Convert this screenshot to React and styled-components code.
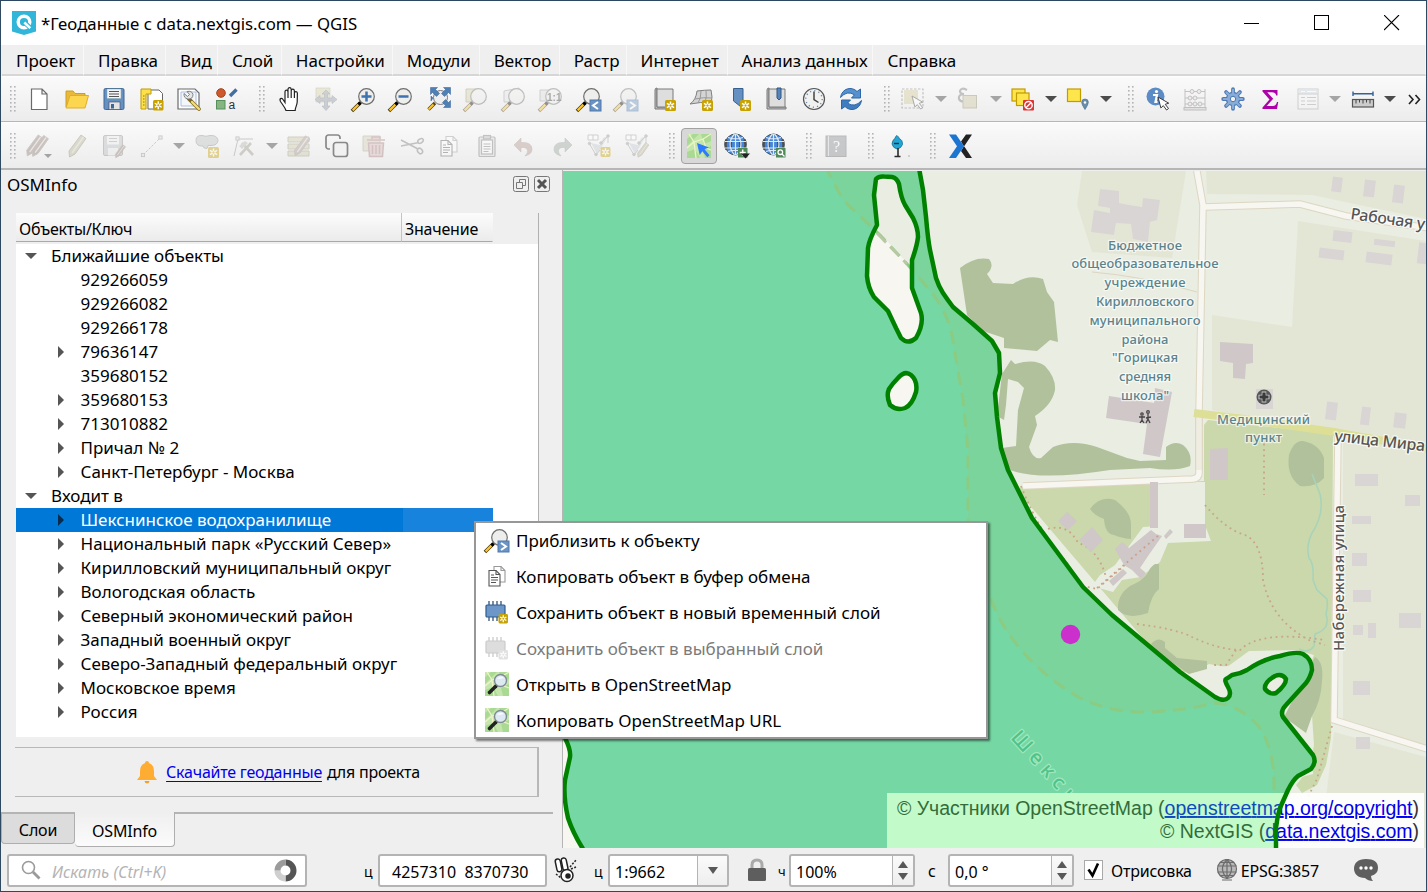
import React from "react";
import styled, { createGlobalStyle, css } from "styled-components";

const GlobalStyle = createGlobalStyle`
  * { box-sizing: border-box; }
  body {
    margin: 0;
    background: #efefef;
    color: #000;
    font-family: "Noto Sans", "Open Sans", sans-serif;
    font-size: 17px;
    overflow: hidden;
  }
  svg { display: block; }
`;

/* ---------- window frame ---------- */

const Window = styled.div`
  display: flex;
  flex-direction: column;
  width: 1427px;
  height: 892px;
  position: relative;
  background: #efefef;
  border: 1px solid #2f4a60;
  border-top-color: #2b4763;
  overflow: hidden;
  white-space: nowrap;
`;

const TitleBar = styled.header`
  display: flex;
  align-items: center;
  flex: 0 0 44px;
  padding: 0 25px 0 11px;
  background: #fff;
`;

const Title = styled.h1`
  flex: 1;
  margin: 0 0 0 5px;
  font-size: 16.8px;
  font-weight: 400;
`;

const WindowButtons = styled.div`
  display: flex;
  gap: 53px;
  svg { margin-right: 1px; }
`;

const MenuBar = styled.nav`
  display: flex;
  flex: 0 0 31px;
  padding-left: 1px;
`;

const MenuEntry = styled.div`
  width: ${(p) => p.$w}px;
  padding: 0 0 0 14px;
  line-height: 31px;
  border-bottom: 2px solid #d6d6d6;
  border-right: 1px solid #f8f8f8;
  height: 31px;
`;

/* ---------- toolbars ---------- */

const Toolbar = styled.div`
  display: flex;
  align-items: center;
  flex: 0 0 ${(p) => p.$h}px;
  background: linear-gradient(#fafafa, #ececec);
  border-bottom: ${(p) => p.$line}px solid #b6b6b6;
  border-top: 1px solid #fdfdfd;
`;

const GripSlot = styled.div`
  display: flex;
  justify-content: flex-end;
  width: ${(p) => p.$w || 24}px;
  padding-right: 4px;
`;

const Tool = styled.div`
  display: flex;
  align-items: center;
  justify-content: center;
  width: 37.5px;
  height: 36px;
  > svg { opacity: ${(p) => (p.$off ? 0.4 : 1)}; }
  ${(p) =>
    p.$active &&
    css`
      > svg {
        box-sizing: content-box;
        padding: 5px;
        background: #d8d8d8;
        border: 1px solid #a2a2a2;
        border-radius: 4px;
      }
    `}
`;

const DropSlot = styled.div`
  width: 17.5px;
  display: flex;
  justify-content: center;
`;

const Triangle = styled.i`
  border: 6px solid transparent;
  border-top-color: ${(p) => (p.$off ? "#a5a5a5" : "#4c4c4c")};
  border-bottom: 0;
`;

function Grip({ w }) {
  return (
    <GripSlot $w={w}>
      <svg width="8" height="26" viewBox="0 0 8 26">
        {[0, 4, 8, 12, 16, 20, 24].map((y) => (
          <g key={y}>
            <rect x="1" y={y} width="1.6" height="1.6" fill="#b4b4b4" />
            <rect x="5" y={y} width="1.6" height="1.6" fill="#b4b4b4" />
          </g>
        ))}
      </svg>
    </GripSlot>
  );
}

/* ---------- icons, all on a 24 × 24 grid ---------- */

const Star = ({ x = 13, y = 13, s = 11 }) => (
  <g transform={`translate(${x} ${y}) scale(${s / 11})`}>
    <rect width="11" height="11" rx="1.6" fill="#c8a200" />
    <path d="M5.5 1.4v8.2M1.9 3.4l7.2 4.2M9.1 3.4L1.9 7.6" stroke="#fff" strokeWidth="1.5" />
    <circle cx="5.5" cy="5.5" r="1.5" fill="#c8a200" stroke="#fff" strokeWidth=".8" />
  </g>
);

const Lens = ({ cx = 14.5, cy = 9.5, r = 7.8 }) => (
  <g>
    <path d="M1.2 22.8L7 17" stroke="#4a3a10" strokeWidth="3.6" strokeLinecap="square" />
    <path d="M1.4 22.6L6.2 17.8" stroke="#fbc52f" strokeWidth="2.2" strokeLinecap="square" />
    <path d="M6.4 17.6L8.8 15.2" stroke="#000" strokeWidth="3" />
    <circle cx={cx} cy={cy} r={r} fill="#eeeeec" stroke="#6e6e6e" strokeWidth="1.2" />
  </g>
);

const Sheet = () => <path d="M1 2h17l4 4v16H1z" fill="#fff" stroke="#6b6b6b" strokeWidth="1.2" />;

const Cursor = ({ x = 11, y = 10, fill = "#fff", stroke = "#333", s = 1 }) => (
  <path
    transform={`translate(${x} ${y}) scale(${s})`}
    d="M0 0l3 11.5 2.6-2.4 3.4 4.6 2.1-1.6-3.5-4.4 3.7-1.2z"
    fill={fill}
    stroke={stroke}
    strokeWidth="1"
  />
);

const Globe = () => (
  <g>
    <circle cx="11.5" cy="10.5" r="10.5" fill="#4587d6" stroke="#4a535e" strokeWidth="1" />
    <path d="M2.5 5.500q-2 5 0 10M20.500 5.500q2 5 0 10M7 7.500q-1 3 0 6M16 7.500q1 3 0 6" stroke="#4a4d52" strokeWidth="2.400" fill="none" />
    <path d="M1 7.500h21M1 14h21M4 3.5q7.5 2.500 15 0M4 17.5q7.5-2.500 15 0M11.5 0v21M10.5 0q-9 10 0 21M12.500 0q9 10 0 21" fill="none" stroke="#dfeaf6" strokeWidth="1.2" />
  </g>
);

const OsmTile = () => (
  <g>
    <rect x="0" y="0" width="24" height="24" fill="#c4e6ac" />
    <path d="M0 5l6-5h6L0 12zM14 0h10v7l-7 3zM0 18l8-3 5 9H0zM16 16l8-4v12h-6z" fill="#aad994" />
    <path d="M2 0l5 8-7 6M7 8l9-3 8-5M16 5l3 9 5 2M7 8l2 16" stroke="#eef3c8" strokeWidth="1.3" fill="none" />
  </g>
);

const Node = ({ x, y }) => <rect x={x - 1.6} y={y - 1.6} width="3.2" height="3.2" fill="#ddd" stroke="#888" strokeWidth=".9" />;

const Chip = () => (
  <g>
    <path d="M4 1v20M8 1v20M12 1v20M16 1v20" stroke="#26456b" strokeWidth="1.2" />
    <rect x="1" y="5" width="19" height="12" rx="1" fill="#6d97c9" stroke="#2f5a8e" strokeWidth="1.2" />
  </g>
);

const Copy = () => (
  <g fill="#fff" stroke="#555" strokeWidth="1.1">
    <path d="M9 2.5h7l4 4V18H9z" stroke="#999" />
    <path d="M16 2.5v4h4" fill="none" stroke="#999" />
    <path d="M4 6.500h7l4 4V22H4z" />
    <path d="M11 6.500v4h4M6 11h3M6 13.500h7M6 16h7M6 18.500h5" fill="none" />
  </g>
);

const Scroll = () => (
  <g>
    <path d="M3 3q0-2 2-2v19h17v2H3z" fill="#bcbcbc" stroke="#7a7a7a" />
    <path d="M5 2h16v18H5z" fill="#dedede" stroke="#7a7a7a" />
  </g>
);

const Poly = () => (
  <g stroke="#999">
    <path d="M4 9l6 11 4-6 7-12-5 2-3 7-9-2z" fill="#c5cbd1" stroke="none" />
    <path d="M1 1h10v5H1zM6 1v5" fill="#fff" />
    <path d="M2 9l7 12 4-5M14 9l7-7v7" fill="none" />
    <g fill="#9a8a96"><circle cx="2.500" cy="9.500" r="1.300" /><circle cx="9" cy="20.500" r="1.300" /><circle cx="21" cy="2" r="1.300" /><circle cx="14" cy="9" r="1.300" /></g>
  </g>
);

const Pencil = ({ t = "", c = "#b7b28e" }) => (
  <g transform={t}>
    <path d="M16 1l5 3.500L10 20l-5.500 3L4 17z" fill={c} stroke="#8b887c" strokeWidth="1" />
    <path d="M18.500 3L7 19" stroke="#dad7c6" strokeWidth="1.400" />
  </g>
);

const ICONS = {
  logo: (
    <>
      <path d="M0 0h24v20.500L12 24 0 20.500z" fill="#31b6da" />
      <circle cx="12" cy="11" r="5.800" fill="none" stroke="#fff" strokeWidth="3.400" />
      <path d="M11.500 10.500l7.500 7" stroke="#31b6da" strokeWidth="4.500" />
      <path d="M12.300 11.500l6 5.700" stroke="#fff" strokeWidth="2.500" />
    </>
  ),
  newFile: <path d="M4.500 2h10.500l5 5v15.500h-15.500zM15 2v5h5" fill="#fff" stroke="#6a6a6a" strokeWidth="1.200" />,
  open: (
    <>
      <path d="M1 20V4h7l2 2.500h10V9" fill="#e9b93a" stroke="#cf9e22" />
      <path d="M1 21L5 8.500h18.500L20 21z" fill="#fcd64f" stroke="#dcae2e" />
    </>
  ),
  save: (
    <>
      <rect x="2" y="1.500" width="20" height="21" rx="1.500" fill="#6590c2" stroke="#3f6796" />
      <rect x="5" y="2" width="14" height="9.500" fill="#f4f4f4" stroke="#8aa" strokeWidth=".5" />
      <path d="M7 4.500h10M7 7h10M7 9.500h10" stroke="#555" />
      <rect x="7" y="15" width="11" height="7.500" fill="#e4e4e4" stroke="#446" strokeWidth=".6" />
      <rect x="9" y="17" width="3" height="4.500" fill="#3f6796" />
    </>
  ),
  layout: (
    <>
      <path d="M8 3h11l3.500 3.500V22H8z" fill="#fff" stroke="#666" />
      <path d="M1 2h10v5H6v15H1z" fill="#fde14a" stroke="#c29b00" />
      <path d="M3 9h1.500M3 12h1.500M3 15h1.500M3 18h1.500" stroke="#9a7b00" />
      <Star x={13} y={13} s={10.5} />
    </>
  ),
  manage: (
    <>
      <Sheet />
      <path d="M4 5h15v14H4z" fill="#f4f6fa" stroke="#a7bfe4" />
      <path d="M11.500 11.500L22 22" stroke="#7d6a24" strokeWidth="3.800" strokeLinecap="round" />
      <path d="M15 15l7 7" stroke="#f3dc73" strokeWidth="2.400" strokeLinecap="round" />
      <path d="M7 6.500l3.500 3 2-2L10 4.500q5-1 6 3-.2 5-5.200 4.500Q6.500 11 7 6.500z" fill="#e5e5e5" stroke="#777" strokeWidth=".9" />
    </>
  ),
  style: (
    <>
      <circle cx="6" cy="6" r="4.300" fill="#cc5a2c" stroke="#a5431b" />
      <path d="M21.500 2.500L15 9" stroke="#426f9f" strokeWidth="3.400" />
      <rect x="1.500" y="13.500" width="8.500" height="8.500" fill="#86b582" stroke="#55905a" />
      <text x="13.500" y="22" fontSize="12" fontFamily="Liberation Sans, sans-serif" fill="#333">a</text>
    </>
  ),
  hand: <path d="M9 23.500c-1-3-3.500-6-5.500-9-1.500-3 1-4 2.500-2l2 3V5c0-2.500 2.700-2.500 3 0V2.500c0-2.500 3-2.500 3.200 0V4c.2-2.500 3-2.300 3.200 0v2c.4-2 2.900-1.800 3 .3L20.200 15c-.3 4-2 5-2 8.500zM11 5v6M14.200 4v7M17.400 6v5" fill="#fff" stroke="#222" strokeWidth="1.200" />,
  panSel: (
    <>
      <rect x="2" y="1" width="14" height="14" fill="#d6d0a4" stroke="#a19a70" strokeWidth=".6" />
      <path d="M12 3l4 4h-2.500v4H18V8.500l5 4-5 4V14h-4.500v5H16l-4 4.500L8 19h2.500v-5H6v2.500l-5-4 5-4V11h4.500V7H8z" fill="#9299a3" stroke="#6f7680" strokeWidth=".7" />
    </>
  ),
  zoomIn: (<><Lens /><path d="M14.500 4.500v10M9.500 9.500h10" stroke="#3d73b0" strokeWidth="2.500" /></>),
  zoomOut: (<><Lens /><path d="M9.500 9.500h10" stroke="#3d73b0" strokeWidth="2.500" /></>),
  zoomFull: (
    <>
      <path d="M1.500 22.500L8 16" stroke="#5b4712" strokeWidth="3.400" />
      <path d="M1.700 22.300L6.500 17.500" stroke="#fbc52f" strokeWidth="2" />
      <circle cx="13.500" cy="10.500" r="7" fill="#eee" stroke="#777" />
      <path d="M3.500.5h7L8.500 2.500l4 4-3 3-4-4-2 2zM23.500.5v7l-2-2-4 4-3-3 4-4-2-2zM23.500 20.500h-7l2-2-3-3 3-3 3 3 2-2zM4 9l2 2-2 3z" fill="#4e80b8" stroke="#345f90" strokeWidth=".5" />
    </>
  ),
  zoomSel: (<><path d="M2 2h13v13H2z" fill="#d6d0a4" stroke="#9d9774" /><Lens /></>),
  zoomLayer: (<><path d="M2 4l15-3v14H2z" fill="#e5e5e5" stroke="#999" /><Lens /></>),
  zoomNative: (
    <>
      <path d="M1 3h11v11H1z" fill="#ddd" stroke="#999" /><Lens />
      <text x="8" y="13.500" fontSize="10" fontWeight="700" fontFamily="Liberation Sans, sans-serif" fill="#333">1:1</text>
    </>
  ),
  zoomLast: (<><Lens /><rect x="13" y="13" width="11" height="11" fill="#6a94c4" stroke="#4e79ac" /><path d="M21 15l-5 3.500 5 3.500" stroke="#fff" strokeWidth="2" fill="none" /></>),
  zoomNext: (<><Lens /><rect x="13" y="13" width="11" height="11" fill="#6a94c4" stroke="#4e79ac" /><path d="M16 15l5 3.500-5 3.500" stroke="#fff" strokeWidth="2" fill="none" /></>),
  newMap: (<><Scroll /><Star /></>),
  new3d: (
    <>
      <path d="M1 17Q7 13 8 4q8-1 14-1 2 7 0 14-10-3-21 0z" fill="#d4d4d4" stroke="#808080" />
      <path d="M6 12q8-2 17-1M12 4q0 8-3 12M17 3q1 7-1 13" fill="none" stroke="#999" />
      <Star />
    </>
  ),
  newBookmark: (<><path d="M6.500 1.500H16v20l-5-4-4.500-3.500z" fill="#6590c2" stroke="#35608f" /><Star /></>),
  bookmarks: (<><Scroll /><path d="M13 1h4v10l-2 2-2-2z" fill="#5684b9" stroke="#2f5684" /></>),
  clock: (
    <>
      <circle cx="12" cy="12" r="10.500" fill="#f1f1ef" stroke="#555" strokeWidth="1.200" />
      <circle cx="12" cy="12" r="8.200" fill="none" stroke="#6b8fb8" strokeWidth="1.400" strokeDasharray="1.200 3.090" />
      <path d="M12 4.500V12.500l4.500 3" fill="none" stroke="#444" strokeWidth="1.500" />
    </>
  ),
  refresh: (
    <>
      <path d="M1.500 10.500C3 1 13-1 18 4.500L21.500 2v9h-9l3-3.200Q8 3 1.500 10.500z" fill="#5590cf" stroke="#2d67a8" />
      <path d="M22.500 13.500C21 23 11 25 6 19.500L2.500 22v-9h9l-3 3.200Q16 21 22.500 13.500z" fill="#3f7cc0" stroke="#2d67a8" />
    </>
  ),
  select: (
    <>
      <rect x="3" y="3" width="14" height="14" fill="#d0c896" stroke="none" />
      <rect x="1" y="2" width="21" height="19" fill="none" stroke="#777" strokeWidth="1.200" strokeDasharray="2.500 1.500" />
      <Cursor x={11} y={9} s={0.95} />
    </>
  ),
  expr: (
    <>
      <path d="M11 3Q5 0 4 4q0 3 4 3-6 .5-5 5 2 4 8 2" stroke="#777" strokeWidth="2.200" fill="none" />
      <rect x="7" y="8.500" width="13.500" height="12.500" fill="#ccc6a2" stroke="#8f8b6c" />
    </>
  ),
  deselect: (
    <>
      <rect x="1" y="2" width="13" height="12" fill="#fde64b" stroke="#c29b00" strokeWidth="1.200" />
      <rect x="5.500" y="6" width="12.500" height="12.500" fill="#fde64b" stroke="#c29b00" strokeWidth="1.200" />
      <rect x="12" y="13" width="11" height="10.500" rx="1" fill="#dd3535" />
      <circle cx="17.500" cy="18.200" r="3.700" fill="none" stroke="#fff" strokeWidth="1.400" />
      <path d="M15 20.700l5-5" stroke="#fff" strokeWidth="1.400" />
    </>
  ),
  selectPlace: (
    <>
      <rect x="1.500" y="2" width="13" height="12.500" fill="#fde64b" stroke="#c29b00" strokeWidth="1.200" />
      <path d="M19 22.500q-3.300-5-3.300-7.200a3.300 3.300 0 0 1 6.600 0Q22.300 17.500 19 22.500z" fill="#6a8fab" stroke="#4b7390" strokeWidth=".7" />
      <circle cx="19" cy="15.500" r="1.200" fill="#fff" />
    </>
  ),
  identify: (
    <>
      <circle cx="9.500" cy="9.500" r="9" fill="#5c8cc6" />
      <circle cx="10.500" cy="4.500" r="1.600" fill="#fff" />
      <path d="M7 8h4l-1.500 7h2" fill="none" stroke="#fff" strokeWidth="2.200" />
      <Cursor x={12} y={10} s={0.95} />
    </>
  ),
  abacus: (
    <g fill="none" stroke="#777">
      <path d="M2 2v19M22 2v19M2 4.500h20M2 11h20M2 17h20" /><rect x="1" y="20.500" width="22" height="2.500" fill="#ccc" />
      <g fill="#eadfe0"><circle cx="9" cy="4.500" r="2" /><circle cx="16" cy="4.500" r="2" /><circle cx="7" cy="11" r="2" /><circle cx="12" cy="11" r="2" /><circle cx="7" cy="17" r="2" /><circle cx="12" cy="17" r="2" /><circle cx="17" cy="17" r="2" /></g>
    </g>
  ),
  gear: (
    <>
      {[0, 45, 90, 135].map((a) => (
        <path key={a} d="M12 2.200v19.600" stroke="#4d7ab3" strokeWidth="3.800" strokeLinecap="round" transform={`rotate(${a} 12 12)`} />
      ))}
      <circle cx="12" cy="12" r="6.600" fill="#88abd8" stroke="#4d7ab3" strokeWidth="1.200" />
      {[0, 45, 90, 135].map((a) => (
        <path key={a} d="M12 2.800v4.600M12 16.600v4.600" stroke="#88abd8" strokeWidth="2.200" strokeLinecap="round" transform={`rotate(${a} 12 12)`} />
      ))}
      <circle cx="12" cy="12" r="2.700" fill="#f2f2f2" stroke="#4d7ab3" />
    </>
  ),
  sigma: <path d="M4.500 3h15v5.500h-1.300Q17.500 5.200 14 5.200H9.200l6 6.500-6.500 7.300H15q3 0 4-4h1.200L19 22H4.500v-1.500l7-8L4.500 4.500z" fill="#ad00a8" />,
  table: (
    <g fill="none" stroke="#999">
      <rect x="2" y="2" width="20" height="20" fill="#f7f7f7" /><rect x="2.500" y="2.500" width="19" height="4" fill="#ccd3dd" stroke="none" />
      <path d="M2 7h20M5 10.500h4M11 10.500h9M5 14h4M11 14h9M5 17.500h4M11 17.500h9" /><path d="M5 4.500h4M11 4.500h9" stroke="#fff" />
    </g>
  ),
  measure: (
    <>
      <path d="M2 4.500v4.500M22 4.500v4.500M2 6.700h20" stroke="#33619a" strokeWidth="1.400" />
      <rect x="1.500" y="12.500" width="21" height="7.500" fill="#ccc" stroke="#555" strokeWidth="1.200" />
      <path d="M5 13v3.500M8.500 13v2.500M12 13v3.500M15.500 13v2.500M19 13v3.500" stroke="#444" />
    </>
  ),
  more: <path d="M5 8l4 4.500L5 17M11.500 8l4 4.500-4 4.500" fill="none" stroke="#222" strokeWidth="1.600" />,
  edits: (
    <>
      <Pencil t="translate(-4 0) scale(.95)" c="#8f7874" /><Pencil t="translate(1.500 .5) scale(.95)" c="#8f7874" />
      <path d="M17 20h8l-4 4z" fill="#333" />
    </>
  ),
  pencil: <Pencil />,
  saveEdits: (
    <>
      <rect x="1.500" y="1.500" width="19" height="20" rx="1.500" fill="#b6babf" stroke="#888" />
      <rect x="5" y="2" width="12" height="8.500" fill="#eee" /><path d="M7 4.500h8M7 7.500h8" stroke="#999" /><rect x="6" y="14" width="10" height="7.500" fill="#e9e9e9" />
      <Pencil t="translate(11 10) scale(.6)" c="#8f7874" />
    </>
  ),
  line: (<><path d="M3 21L20 4" stroke="#888" strokeDasharray="2.500 1.500" /><Node x={3} y={21} /><Node x={20.500} y={3.500} /></>),
  addPoly: (
    <>
      <path d="M1 6.500Q1 1 7 1.500q4 1.500 8 0 7.500-.5 8 5-.5 5-7 5h-3l-1 3q-4 0-4-2.500-7 .5-7-5.500z" fill="#b9c0bd" stroke="#858b89" />
      <Star />
    </>
  ),
  vertex: (
    <>
      <path d="M2 22L6 5h15" stroke="#888" fill="none" /><Node x={5.500} y={4.500} />
      <path d="M8 21L19 9M10 9l11 12" stroke="#999787" strokeWidth="2.600" />
      <path d="M7 12l6-5 3 2-6 6z" fill="#b5b5b0" />
    </>
  ),
  multi: (<><path d="M1 3h21v5H1zM1 10h21v5H1zM1 17h21v5H1z" fill="#cdc9a6" stroke="#9b997e" /><Pencil t="translate(4 1) scale(.9)" c="#a89490" /></>),
  dup: (
    <g fill="none" stroke="#888" strokeWidth="1.700">
      <path d="M5 15H3.500A2.500 2.500 0 0 1 1 12.500v-9A2.500 2.500 0 0 1 3.500 1h9A2.500 2.500 0 0 1 15 3.500V5" />
      <rect x="8.500" y="8.500" width="14" height="14" rx="2.500" fill="#f1f1f1" />
    </g>
  ),
  trash: (
    <>
      <path d="M1 2h17v15H1z" fill="#d3cdb0" stroke="#a9a58c" />
      <path d="M5 6h18M10 5V3h8v2M6.500 9h15l-1 13.500H7.500zM10.500 11v9M14 11v9M17.500 11v9" fill="#d8b6b6" stroke="#a77c7c" strokeWidth="1.500" />
    </>
  ),
  cut: (
    <g fill="none" stroke="#777" strokeWidth="1.500">
      <path d="M1 6l17 9M1 12l18-3.500" /><ellipse cx="20" cy="17" rx="3" ry="2.200" transform="rotate(50 20 17)" /><ellipse cx="20.500" cy="7" rx="3" ry="2" transform="rotate(-30 20.500 7)" />
    </g>
  ),
  copy: <Copy />,
  paste: (
    <g fill="#fff" stroke="#777" strokeWidth="1.200">
      <rect x="4" y="3" width="16" height="19.500" rx="1" fill="#ddd" /><rect x="6.500" y="6" width="11" height="14" />
      <rect x="8.500" y="1.500" width="7" height="3.500" fill="#bbb" /><path d="M8.500 10h7M8.500 12.500h7M8.500 15h7M8.500 17.500h5" />
    </g>
  ),
  undo: <path d="M2 11l7-7v4.500q11-1 11 7Q20 20 13 22q3-3 2.500-5.500Q15 13 9 13.500V18z" fill="#b0958b" stroke="#96817a" strokeWidth=".6" />,
  redo: <path d="M22 11l-7-7v4.500q-11-1-11 7Q4 20 11 22q-3-3-2.500-5.500Q9 13 15 13.500V18z" fill="#98a49c" stroke="#828e86" strokeWidth=".6" />,
  polyNew: (<><Poly /><Star x={13.500} y={13} s={10} /></>),
  polyEdit: (<><Poly /><Pencil t="translate(10 8) scale(.66)" /></>),
  osmInfo: (
    <>
      <OsmTile />
      <path d="M10 9l12 4.500-4.500 1.800 5 6-2.200 1.900-5-6-2.600 3.800z" fill="#2d79ff" />
    </>
  ),
  globeAdd: (<><Globe /><rect x="14" y="14" width="9.500" height="9.500" fill="#4f8a58" /><path d="M18.700 15.500v6M15.700 18.500h6" stroke="#fff" strokeWidth="1.500" /><path d="M17 19.500h9l-4.500 5z" fill="#222" /></>),
  globeFind: (<><Globe /><rect x="14" y="14" width="9.500" height="9.500" fill="#4f8a58" /><circle cx="18.300" cy="18.200" r="2.300" fill="none" stroke="#fff" strokeWidth="1.300" /><path d="M20 20l2.500 2.500" stroke="#fff" strokeWidth="1.300" /></>),
  help: (
    <>
      <rect x="2" y="2" width="20" height="20.500" fill="#84898e" stroke="#666" /><path d="M4.500 2v20" stroke="#d5d5d5" />
      <text x="9" y="18" fontSize="16" fontFamily="Liberation Serif, serif" fill="#fff">?</text>
    </>
  ),
  marker: (
    <>
      <path d="M11 1.500Q13 3 13.500 5q3 .5 3 5.500-1.500 4-5.500 4.500-4-1-5-5 .5-4.500 3-5.500 0-2 2-3z" fill="#22a6d6" stroke="#156a8a" strokeWidth=".8" />
      <path d="M12 14v8M8.500 22.500h6" stroke="#2b2b2b" strokeWidth="1.600" /><path d="M8 9.500h5" stroke="#134" strokeWidth="1.400" /><circle cx="23" cy="22" r=".7" fill="#999" />
    </>
  ),
  xTool: (<><path d="M24 .5h-6l-5 7L16 12.500zM16 12l8 12h-6l-5-7z" fill="#222" /><path d="M1 .5h7L16 12.200 8 24H1l8-11.800z" fill="#1c75d0" /></>),
  chipNew: (<><Chip /><Star x={13.500} y={14} s={9.5} /></>),
  osmSearch: (
    <>
      <OsmTile />
      <path d="M4.500 20.500L11 14" stroke="#222" strokeWidth="3.600" strokeLinecap="round" />
      <circle cx="15.500" cy="8.500" r="6" fill="#dfe9f4" stroke="#7e8a94" strokeWidth="1.400" />
      <path d="M12 7q3-4 7-1-3 1-7 1z" fill="#f8fbff" />
    </>
  ),
};

const Icon = ({ name, size = 24 }) => (
  <svg width={size} height={size} viewBox="0 0 24 24" overflow="visible">
    {ICONS[name]}
  </svg>
);

/* Items: "|" a grip, "v" a drop-down arrow, a leading "-" marks a disabled entry, "*" a pressed one. */
const ROW_ONE = "| newFile open save layout manage style | hand -panSel zoomIn zoomOut zoomFull -zoomSel -zoomLayer -zoomNative zoomLast -zoomNext newMap new3d newBookmark bookmarks clock refresh | -select -v -expr -v deselect v selectPlace v | identify -abacus gear sigma -table -v measure v".split(" ");
const ROW_TWO = "| -edits -pencil -saveEdits -line -v -addPoly -vertex -v -multi dup -trash -cut -copy -paste -undo -redo -polyNew -polyEdit | *osmInfo globeAdd globeFind | -help | marker | xTool".split(" ");

function ToolItems({ items }) {
  return items.map((it, i) => {
    const off = it[0] === "-";
    const active = it[0] === "*";
    const name = off || active ? it.slice(1) : it;
    if (name === "|") return <Grip key={i} w={i === 0 ? 19.5 : 24.5} />;
    if (name === "v") return <DropSlot key={i}><Triangle $off={off} /></DropSlot>;
    return <Tool key={i} $off={off} $active={active}><Icon name={name} /></Tool>;
  });
}

const Overflow = styled.div`
  width: 26px;
  padding-left: 5px;
`;

/* ---------- dock panel ---------- */

const Body = styled.main`
  display: flex;
  flex: 0 0 678px;
`;

const Dock = styled.section`
  display: flex;
  flex-direction: column;
  width: 562px;
  border-right: 1px solid #b5b5b5;
`;

const DockTitle = styled.div`
  display: flex;
  align-items: center;
  flex: 0 0 43px;
  padding: 0 12px 15px 6px;
  > span { flex: 1; padding-top: 1px; }
  svg { margin-left: 5px; }
`;

const Tree = styled.div`
  flex: 0 0 524px;
  width: 524px;
  margin-left: 14px;
  border-right: 1px solid #b0b0b0;
  border-left: 1px solid #efefef;
  background: #fff;
`;

const TreeHeader = styled.div`
  display: flex;
  height: 31px;
  background: #efefef;
`;

const HeaderCell = styled.div`
  width: ${(p) => p.$w}px;
  height: 29px;
  padding-left: 3px;
  font-size: 16px;
  line-height: 32px;
  letter-spacing: -0.22px;
  background: linear-gradient(#fcfcfc, #ebebeb);
  border-bottom: 1px solid #a9a9a9;
  border-right: 1px solid ${(p) => (p.$last ? "transparent" : "#c4c4c4")};
`;

const TreeRow = styled.div`
  display: flex;
  align-items: center;
  width: 477px;
  height: 24px;
  padding-left: ${(p) => (p.$top ? 9 : 42)}px;
  color: ${(p) => (p.$sel ? "#fff" : "#000")};
  background: ${(p) => (p.$sel ? "linear-gradient(90deg, #0078d7 387px, #1783dc 387px)" : "none")};
  line-height: 24px;
`;

const Expander = styled.i`
  width: ${(p) => (p.$top ? 26 : 22.5)}px;
  &::before {
    content: "";
    display: ${(p) => (p.$leaf ? "none" : "block")};
    width: 0;
    border: solid transparent;
    ${(p) =>
      p.$top
        ? css`border-width: 6px 6px 0; border-top-color: #555;`
        : css`border-width: 6px 0 6px 6px; border-left-color: ${p.$sel ? "#0a2c4c" : "#555"};`}
  }
`;

const TREE = [
  ["Ближайшие объекты", "top"],
  ["929266059", "leaf"],
  ["929266082", "leaf"],
  ["929266178", "leaf"],
  ["79636147"],
  ["359680152", "leaf"],
  ["359680153"],
  ["713010882"],
  ["Причал № 2"],
  ["Санкт-Петербург - Москва"],
  ["Входит в", "top"],
  ["Шекснинское водохранилище", "sel"],
  ["Национальный парк «Русский Север»"],
  ["Кирилловский муниципальный округ"],
  ["Вологодская область"],
  ["Северный экономический район"],
  ["Западный военный округ"],
  ["Северо-Западный федеральный округ"],
  ["Московское время"],
  ["Россия"],
];

const Notice = styled.div`
  display: flex;
  align-items: center;
  justify-content: center;
  flex: 0 0 50px;
  width: 524px;
  margin: 10px 0 0 14px;
  padding-left: 5px;
  border: 1px solid #b8b8b8;
  border-left: 0;
  border-right-width: 2px;
  font-size: 16px;
  letter-spacing: -0.23px;
  svg { margin-right: 9px; }
`;

const Link = styled.a`
  color: #0000ee;
  text-decoration: underline;
  text-underline-offset: 3px;
  margin-right: 5px;
`;

const Tabs = styled.div`
  display: flex;
  align-items: flex-start;
  margin-top: 15px;
  font-size: 16px;
`;

const Tab = styled.div`
  width: ${(p) => p.$w}px;
  height: ${(p) => (p.$on ? 35 : 32)}px;
  line-height: ${(p) => (p.$on ? 39 : 33)}px;
  letter-spacing: -0.2px;
  text-align: center;
  background: ${(p) => (p.$on ? "linear-gradient(#efefef, #fbfbfb)" : "#dcdcdc")};
  border: 1px solid #aeaeae;
  border-top: ${(p) => (p.$on ? "0" : "2px solid #b4b4b4")};
  border-left-width: ${(p) => (p.$on ? 0 : 1)}px;
  border-radius: 0 0 4px 4px;
`;

const TabLine = styled.div`
  flex: 1;
  height: 2px;
  margin-right: 9px;
  background: #b4b4b4;
`;

/* ---------- status bar ---------- */

const StatusBar = styled.footer`
  display: flex;
  align-items: center;
  flex: 0 0 42px;
  padding: 2px 0 0 6px;
  font-size: 16px;
`;

const Field = styled.div`
  display: flex;
  align-items: center;
  width: ${(p) => p.$w}px;
  height: 33px;
  padding-left: ${(p) => p.$pad || 5}px;
  background: #fff;
  border: 2px solid #b4b4b4;
  border-radius: 3px;
  color: ${(p) => (p.$hint ? "#b4b4b4" : "#000")};
  font-style: ${(p) => (p.$hint ? "italic" : "normal")};
  white-space: pre;
  > span { flex: 1; padding-top: 3px; }
`;

const Stepper = styled.div`
  display: flex;
  flex-direction: column;
  align-items: center;
  justify-content: center;
  gap: 5px;
  width: ${(p) => p.$w || 21}px;
  height: 29px;
  background: linear-gradient(#fafafa, #eee);
  border-left: 1px solid #b4b4b4;
`;

const Tip = styled.i`
  border: 5.5px solid transparent;
  ${(p) =>
    p.$up
      ? css`border-top: 0; border-bottom: 7px solid #585858;`
      : css`border-bottom: 0; border-top: 7px solid #585858;`}
`;

const Caption = styled.label`
  width: ${(p) => p.$w}px;
  margin-left: ${(p) => p.$ml || 0}px;
  margin-right: ${(p) => p.$mr || 0}px;
  padding-top: 2px;
  letter-spacing: -0.2px;
  font-size: ${(p) => p.$size || 16}px;
`;

const Slot = styled.div`
  display: flex;
  width: ${(p) => p.$w}px;
  padding-left: ${(p) => p.$pl || 0}px;
`;

const CheckBox = styled.div`
  width: 19px;
  height: 20px;
  margin: 0 8px 0 10px;
  background: #fff;
  border: 1px solid #a9a9a9;
`;

/* ---------- context menu ---------- */

const ContextMenu = styled.div`
  position: absolute;
  left: 473px;
  top: 520px;
  width: 514px;
  height: 218px;
  background: #fff;
  border: 2px solid #979797;
  box-shadow: 2px 2px 2px rgba(0, 0, 0, 0.5);
`;

const MenuItem = styled.div`
  display: flex;
  align-items: center;
  gap: 7px;
  height: 36px;
  padding: 0 0 2px 9px;
  color: ${(p) => (p.$off ? "#7b7b7b" : "#000")};
  > svg { opacity: ${(p) => (p.$off ? 0.3 : 1)}; filter: ${(p) => (p.$off ? "grayscale(1)" : "none")}; }
`;

const ACTIONS = [
  ["zoomNext", "Приблизить к объекту"],
  ["copy", "Копировать объект в буфер обмена"],
  ["chipNew", "Сохранить объект в новый временный слой"],
  ["chipNew", "Сохранить объект в выбранный слой", true],
  ["osmSearch", "Открыть в OpenStreetMap"],
  ["osmSearch", "Копировать OpenStreetMap URL"],
];

/* ---------- map ---------- */

const MapCanvas = styled.svg`
  flex: 0 0 863px;
  width: 863px;
  height: 677px;
  margin-top: 1px;
  background: #e9ede2;
`;

const COAST =
  "M919 168L923 190 926 217Q928 240 930 250L936 278Q939 287 943 293T953 307L973 324 992 341 999 353 1000 373 995 393 997 417 1001 448 1008 470 1032 518 1083 587 1112 615 1180 672 1215 697Q1224 702 1228 698T1228 687 1226 679 1232 675Q1240 674 1247 670 1263 659 1280 656 1296 651 1303 654 1312 659 1312 670 1310 678 1306 683L1286 705Q1280 711 1283 717L1313 755Q1317 762 1311 769L1298 776Q1293 780 1288 790L1280 808Q1277 818 1276 828V850";
const WATER = COAST + "H583Q573 833 568 818 563 796 565 780L570 757Q571 750 565 738H560V168Z";
const ISLET =
  "M898 378Q905 370 911 375 918 381 916 392 912 405 905 408 897 411 890 405 886 396 889 389 893 383 898 378Z";
const ISLANDS =
  "M876 179Q879 176 884 176.500L892 177Q897 178 899 184 901 198 905 205L913 218Q918 228 918 237 917 246 912 260V288L921 313Q924 324 916 338 908 345 901 338L896 328 888 311 874 297Q868 288 867 276L868 248Q869 240 877 225L874 195Z" + ISLET + "M1275 676Q1282 673 1286 679 1286 685 1276 693 1270 695 1265 689 1264 682 1275 676Z";
const BOUNDARY =
  "M825 166L843 200 880 235 908 265 932 293Q947 312 952 335L963 400 968 450V515Q970 560 992 602 1015 660 1080 698 1110 713 1150 712 1190 710 1212 703 1238 703 1259 727 1275 750 1274 790V850";

const HOUSES = [
  [1332, 177, 10, 15], [1364, 180, 11, 17], [1393, 185, 11, 18], [1333, 231, 19, 11], [1319, 249, 25, 10], [1374, 240, 21, 6],
  [1366, 253, 26, 11], [1418, 243, 12, 21], [1326, 402, 11, 18], [1361, 407, 9, 18], [1394, 413, 12, 15],
];
const PLAIN_HOUSES = [
  [1355, 474, 23, 12], [1405, 495, 15, 11], [1352, 516, 19, 8], [1352, 553, 15, 13], [1353, 590, 18, 12], [1353, 625, 10, 10],
  [1368, 623, 8, 15], [1399, 613, 22, 15], [1353, 681, 17, 14], [1356, 737, 14, 12],
];

const SCHOOL = [
  ["Бюджетное", 74], ["общеобразовательное", 147], ["учреждение", 81], ["Кирилловского", 98], ["муниципального", 111],
  ["района", 47], ["\"Горицкая", 66], ["средняя", 52], ["школа\"", 48],
];

const MapLabel = styled.text`
  font-family: "Noto Sans", "Open Sans", sans-serif;
  font-weight: 500;
  font-size: ${(p) => p.$size || 13}px;
  fill: ${(p) => p.$fill || "#5b838c"};
  stroke: ${(p) => p.$halo || "rgba(255,255,255,.65)"};
  stroke-width: 2.5px;
  stroke-linejoin: round;
  paint-order: stroke;
`;

const StreetName = styled(MapLabel)`
  font-size: ${(p) => p.$size || 16}px;
  fill: #555;
  stroke: rgba(255, 255, 255, 0.75);
`;

const Credit = styled.text`
  font-family: "Liberation Sans", Arial, sans-serif;
  font-size: 19.500px;
  fill: #333;
  text-anchor: end;
  tspan { fill: #0000ee; text-decoration: underline; }
`;

const road = (d, w = 6, c = "#f8f6f0") => (
  <>
    <path d={d} stroke="#ddd6c2" strokeWidth={w + 2} fill="none" />
    <path d={d} stroke={c} strokeWidth={w} fill="none" />
  </>
);

const trail = { fill: "none", stroke: "#c9a587", strokeWidth: 1.8, strokeDasharray: "1.8 3.8" };

function MapView() {
  return (
    <MapCanvas viewBox="563 171 863 677">
      <defs>
        <clipPath id="water"><path d={WATER + ISLANDS} clipRule="evenodd" /></clipPath>
      </defs>
      <rect x="563" y="171" width="863" height="677" fill="#e9ede2" />

      {/* residential blocks */}
      <g fill="#e4e6d5">
        <path d="M1082 171L1077 205 1092 252 1172 258 1186 171z" />
        <path d="M1206 171h220v48l-114-24-105-1z" />
        <path d="M1298 221l128 20v212l-85-14-129-29V315l80 12z" />
        <path d="M1343 436l83 14v295l-83-26z" />
        <path d="M1334 732l92 25v91h-106z" />
      </g>
      {/* parks */}
      <path d="M1015 488L1204 481V425L1208 420 1333 434 1331 738 1326 765 1317 785 1302 793 1296 785 1310 768 1314 745 1311 700 1312 655 1296 650 1252 651 1235 665 1212 668 1205 665 1190 673 1170 670z" fill="#cad8ab" />
      <path d="M1158 482H1205V525L1211 541 1168 543 1160 562 1141 577 1122 580 1113 592 1092 586 1100 575 1115 565 1143 527 1158 526z" fill="#e9ede2" />
      <path d="M1189 675l20-11 18 3 22-16 50 0 15 4-10 26-70 20-20-5zM1304 726l10 26 -1 22-15 4-12-50z" fill="#e9ede2" />

      {/* woods */}
      <g fill="#b1c19c">
        <path d="M960 268Q975 256 989 259 995 266 987 274L993 283 1013 284Q1028 274 1043 279L1047 292 1054 302 1058 342 1050 340 1037 351 1004 348V338L983 331 967 315z" />
        <path d="M1002 374L1011 360 1015 364Q1035 358 1045 366 1056 378 1055 390 1052 405 1035 416L1037 425 1029 447Q1033 460 1041 458L1053 447Q1073 439 1097 447L1127 458 1140 461 1166 460V447Q1175 440 1183 445 1193 453 1190 466 1175 472 1150 468L1110 470Q1040 481 1010 470L1002 448 1016 446 1018 410 1024 388 1018 382 1008 379 1006 405 1004 420 997 416z" />
        <path d="M1090 509q10-14 25-9 16 12 16 24v15q-10-1-17-4-9-1-10-16-9-3-14-10z" />
        <path d="M1155 564h4v25q-8 6-11 24-20 7-30-3-1-15 12-24 12-5 17-12 4-8 8-10z" />
        <path d="M1151 644q7-8 14-2v6l12 10 30 3v8l-18 5-26-18z" />
        <path d="M1289 455q5-15 14-14 16 3 21 17v20q-9 10-24 8-14-10-11-31z" />
        <path d="M1315 657q9 5 7 24-1 20-10 35l-6 17-22-16z" />
      </g>

      {/* roads */}
      {road("M1196 166L1203 205 1199 414V455M1199 440l0 33q0 5-6 6l-170 7M1204 207l96-3 46 12 90 13M1338 436l-4 284 100 31", 5.5)}
      <path d="M1092 272q50 4 105 20" stroke="#ddd6c2" fill="none" />
      {road("M1199 410v60", 5.5, "#efece2")}
      <path d="M1194 413l50 6 90 13 100 18" stroke="#dcdf95" strokeWidth="8" fill="none" />

      {/* stream and footpaths */}
      <path d="M1312 474l8 20q4 17-5 34-10 15-6 30 5 5 4 22l4 10 10 9q1 8-1 15 5 15-11 20l-1 12q-6 8-15 3" stroke="#a7d3bb" strokeWidth="1.500" fill="none" />
      <path {...trail} d="M1021 486q20 50 45 75 12 20 17 25l14 3 62-53M1048 529q20-6 30 14 20 6 28 34M1205 505q20 24 40 30 18 8 18 45 8 40 46 60l16 5M1264 438v57M1137 624q40 5 55 13 25 12 48 13 20-20 85-10M1236 650l-10 15-13 0M1332 726l-15 53-10 20" />

      {/* buildings */}
      <g fill="#dad5d5">
        <path d="M1100 189l19 2v12l10 2 13 2 1-9 17 2-3 20-7 2-2 20-15-3-2-15-15-1-2 12-23-3 3-22 16 3 0-5-12-2z" />
        {HOUSES.map(([x, y, w, h]) => <rect key={x + "-" + y} x={x} y={y} width={w} height={h} transform={`rotate(7 ${x + w / 2} ${y + h / 2})`} />)}
        {PLAIN_HOUSES.map(([x, y, w, h]) => <rect key={x + "-" + y} x={x} y={y} width={w} height={h} />)}
        <rect x="1256" y="389" width="17" height="20" />
      </g>
      <g fill="#cfc7c8">
        <path d="M1109 396l45 7 1-15 17 4-12 65-17-3 4-30-41-6z" />
        <path d="M1220 342l33 2v19l-7 1-1 15-12-1 0-15-13-2z" />
        <path d="M1150 482h8v46h-8zM1210 449l18-1v32h-18zM1184 524h22v14h-22zM1058 521l9-9 10 9-9 9zM1079 540l13-13 11 13-12 12z" />
        <path d="M1115 549l7-7 7 6 22-18 5 4 6 2-14 20-8 12 6 5-5 6-9-9-8-5zM1109 581l14-12 4 4-14 13zM1164 536l6-7 3 3-7 7z" />
      </g>
      <path {...trail} stroke="#c9a08a" d="M1097 588l62-53" />

      {/* institution labels */}
      {SCHOOL.map(([t, w], i) => (
        <MapLabel key={t} x="1145" y={249.5 + i * 18.8} textAnchor="middle" textLength={w}>{t}</MapLabel>
      ))}
      <MapLabel x="1217" y="424" textLength="93">Медицинский</MapLabel>
      <MapLabel x="1245" y="442" textLength="37">пункт</MapLabel>
      <StreetName x="1350" y="219" textLength="75" transform="rotate(8 1350 219)">Рабочая у</StreetName>
      <StreetName x="1334" y="441" textLength="91" transform="rotate(6.500 1334 441)">улица Мира</StreetName>
      <StreetName $size={15} x="1344" y="651" textLength="146" transform="rotate(-90 1344 651)">Набережная улица</StreetName>

      {/* clinic and school signs */}
      <circle cx="1264" cy="397" r="7.500" fill="#565656" />
      <path d="M1264 391.500v11M1258.500 397h11" stroke="#c9c9c9" strokeWidth="4.600" />
      <path d="M1264 392.500v9M1259.500 397h9" stroke="#3a3a3a" strokeWidth="3.200" />
      <g stroke="#444" strokeWidth="1.300" fill="none">
        <circle cx="1142" cy="414" r="1.200" /><path d="M1142 416v4l-2 3M1142 420l2 3M1139 417h6" />
        <circle cx="1148" cy="412" r="1.300" /><path d="M1148 414v5l-2 4M1148 419l2 4M1146 418l5-1" />
      </g>

      {/* reservoir */}
      <g clipPath="url(#water)">
        <path d="M560 168h870v685H560z" fill="#7ad49c" />
        <path d={BOUNDARY + "H560V168Z"} fill="#75d7a4" />
      </g>
      <path d="M877 230L912 268V288L921 313Q924 324 916 338 908 345 901 338L896 328 888 311 874 297Q868 288 867 276L868 248Q869 240 877 230z" fill="#f7f6f1" />
      <path d={ISLET} fill="#f7f6f1" />
      <path d="M562 738l8 12-6 30 0 20 5 20 13 28h-20z" fill="#f7f6f1" />
      <path d={BOUNDARY} fill="none" stroke="#8bcb82" strokeWidth="3" strokeDasharray="13 8" />
      <path d="M877 233l30 31" fill="none" stroke="#b9c8a4" strokeWidth="3" strokeDasharray="13 6" />
      <MapLabel $size={20} $fill="#4fc38a" $halo="rgba(190,245,205,.6)" x="1010" y="738" transform="rotate(48 1010 738)" letterSpacing="6">Шексн</MapLabel>

      {/* credit plate, tinted where the reservoir lies over it */}
      <rect x="887" y="793" width="537" height="55" fill="#fff" fillOpacity=".9" />
      <g clipPath="url(#water)"><rect x="887" y="793" width="537" height="55" fill="#fff" /></g>
      <Credit x="1419" y="815" textLength="522">© Участники OpenStreetMap (<tspan>openstreetmap.org/copyright</tspan>)</Credit>
      <Credit x="1419" y="838" textLength="259">© NextGIS (<tspan>data.nextgis.com</tspan>)</Credit>
      <g clipPath="url(#water)">
        <path d="M887 793h540v60H887z" fill="rgb(52,238,76)" fillOpacity=".3" />
      </g>
      <path d={COAST} fill="none" stroke="#008200" strokeWidth="4.500" strokeLinejoin="round" />
      <path d={ISLANDS} fill="none" stroke="#008200" strokeWidth="4.500" strokeLinejoin="round" />
      <path d="M583 849Q573 833 568 818 563 796 565 780L570 757Q571 750 565 738" fill="none" stroke="#008200" strokeWidth="4.500" />
      <circle cx="1070.500" cy="634.500" r="9.700" fill="#cc30cc" />
    </MapCanvas>
  );
}

const MENUS = [
  ["Проект", 82], ["Правка", 82], ["Вид", 52], ["Слой", 64], ["Настройки", 111], ["Модули", 87], ["Вектор", 80],
  ["Растр", 67], ["Интернет", 101], ["Анализ данных", 146], ["Справка", 553],
];

export default function App() {
  return (
    <>
      <GlobalStyle />
      <Window>
        <TitleBar>
          <Icon name="logo" />
          <Title>*Геоданные с data.nextgis.com — QGIS</Title>
          <WindowButtons>
            <svg width="16" height="16"><path d="M0 8.500h15" stroke="#000" /></svg>
            <svg width="16" height="16"><rect x=".5" y=".5" width="14" height="14" fill="none" stroke="#000" /></svg>
            <svg width="16" height="16"><path d="M0 0l15 15M15 0L0 15" stroke="#000" strokeWidth="1.100" /></svg>
          </WindowButtons>
        </TitleBar>
        <MenuBar>
          {MENUS.map(([t, w]) => <MenuEntry key={t} $w={w}>{t}</MenuEntry>)}
        </MenuBar>

        <Toolbar $h={46} $line={1}>
          <ToolItems items={ROW_ONE} />
          <Overflow><Icon name="more" /></Overflow>
        </Toolbar>
        <Toolbar $h={48} $line={2}>
          <ToolItems items={ROW_TWO} />
        </Toolbar>

        <Body>
          <Dock>
            <DockTitle>
              <span>OSMInfo</span>
              <svg width="16" height="16" viewBox="0 0 16 16" fill="none" stroke="#777">
                <rect x=".5" y=".5" width="15" height="15" rx="2" /><path d="M6.500 6V3.500h6v6H10M3.500 6.500h6v6h-6z" />
              </svg>
              <svg width="16" height="16" viewBox="0 0 16 16" fill="none" stroke="#777">
                <rect x=".5" y=".5" width="15" height="15" rx="2" /><path d="M4 4l8 8M12 4l-8 8" stroke="#555" strokeWidth="3" />
              </svg>
            </DockTitle>
            <Tree>
              <TreeHeader>
                <HeaderCell $w={386}>Объекты/Ключ</HeaderCell>
                <HeaderCell $w={91} $last>Значение</HeaderCell>
              </TreeHeader>
              {TREE.map(([t, k]) => (
                <TreeRow key={t} $top={k === "top"} $sel={k === "sel"}>
                  <Expander $top={k === "top"} $leaf={k === "leaf"} $sel={k === "sel"} />
                  {t}
                </TreeRow>
              ))}
            </Tree>
            <Notice>
              <svg width="20" height="24" viewBox="0 0 20 24">
                <path d="M10 1q2 0 2 2 5 2 5 8v5l3 4H0l3-4v-5q0-6 5-8 0-2 2-2z" fill="#ffac33" /><path d="M7.500 21h5q-.5 2.500-2.500 2.500T7.500 21z" fill="#f2a02b" />
              </svg>
              <Link>Скачайте геоданные</Link>для проекта
            </Notice>
            <Tabs>
              <Tab $w={74}>Слои</Tab>
              <Tab $w={100} $on>OSMInfo</Tab>
              <TabLine />
            </Tabs>
          </Dock>
          <MapView />
        </Body>

        <StatusBar>
          <Field $w={300} $pad={12} $hint>
            <Slot $w={31}>
              <svg width="20" height="20" viewBox="0 0 20 20" fill="none" stroke="#9a9a9a"><circle cx="7.500" cy="7.500" r="6" strokeWidth="1.600" /><path d="M12 12l6.500 6.500" strokeWidth="2.800" /></svg>
            </Slot>
            <span>Искать (Ctrl+K)</span>
            <Slot $w={31}>
              <svg width="23" height="23" viewBox="0 0 23 23" fill="none" strokeWidth="6">
                <path d="M11.500 3.500a8 8 0 0 1 0 16" stroke="#555" /><path d="M11.500 19.500a8 8 0 0 1-8-8" stroke="#cfcfcf" /><path d="M3.500 11.500a8 8 0 0 1 8-8" stroke="#9b9b9b" />
              </svg>
            </Slot>
          </Field>
          <Caption $w={10} $ml={57} $mr={4} $size={14}>ц</Caption>
          <Field $w={169} $pad={12}><span>4257310  8370730</span></Field>
          <Slot $w={47} $pl={6}>
            <svg width="24" height="26" viewBox="0 0 24 26" fill="#fff" stroke="#222" strokeWidth="1.500">
              <rect x="3" y="2" width="5" height="13" rx="2.500" transform="rotate(-12 5 8)" /><rect x="9" y="1" width="5" height="13" rx="2.500" transform="rotate(-12 11 7)" />
              <circle cx="14" cy="18.500" r="6" /><circle cx="15" cy="19" r="2" fill="#222" /><path d="M17 10l6-7M18 12l5-2M3 17l5 4" strokeDasharray="2 1.500" />
            </svg>
          </Slot>
          <Caption $w={10} $mr={4} $size={14}>ц</Caption>
          <Field $w={121}><span>1:9662</span><Stepper $w={30}><Tip /></Stepper></Field>
          <Slot $w={49} $pl={18}>
            <svg width="20" height="24" viewBox="0 0 20 24"><path d="M5 12V7q0-5 5-5t5 5v5" fill="none" stroke="#aaa" strokeWidth="3" /><rect x="1" y="10" width="18" height="13" rx="1.500" fill="#5e5e5e" /></svg>
          </Slot>
          <Caption $w={8} $mr={3} $size={13}>ч</Caption>
          <Field $w={126}><span>100%</span><Stepper><Tip $up /><Tip /></Stepper></Field>
          <Caption $w={8} $ml={13} $mr={12}>с</Caption>
          <Field $w={126}><span>0,0 °</span><Stepper><Tip $up /><Tip /></Stepper></Field>
          <CheckBox>
            <svg width="17" height="18" viewBox="0 0 17 18"><path d="M3.500 8.500l4 6 5.500-12" fill="none" stroke="#000" strokeWidth="2.600" /></svg>
          </CheckBox>
          <Caption>Отрисовка</Caption>
          <Slot $w={49} $pl={24}>
            <svg width="22" height="22" viewBox="0 0 22 22" fill="none" stroke="#6d6d6d" strokeWidth="1.200">
              <circle cx="11" cy="10" r="9.500" fill="#b9b9b9" /><path d="M1.500 7h19M1.500 13h19M11 0v20M11 .5q-9 9 0 19M11 .5q9 9 0 19M4 3.500h14M4 16.500h14M6 21h10" />
            </svg>
          </Slot>
          <Caption>EPSG:3857</Caption>
          <Slot $w={60} $pl={34}>
            <svg width="26" height="24" viewBox="0 0 26 24"><path d="M13 1C5 1 1 5 1 10.500S5 20 12 20q3 3 8 3-2-2-2-5 7-2 7-8 0-9-12-9z" fill="#5f5f5f" /><g fill="#fff"><circle cx="8" cy="10" r="1.700" /><circle cx="13" cy="10" r="1.700" /><circle cx="18" cy="10" r="1.700" /></g></svg>
          </Slot>
        </StatusBar>

        <ContextMenu>
          {ACTIONS.map(([icon, t, off]) => (
            <MenuItem key={t} $off={off}><Icon name={icon} />{t}</MenuItem>
          ))}
        </ContextMenu>
      </Window>
    </>
  );
}
